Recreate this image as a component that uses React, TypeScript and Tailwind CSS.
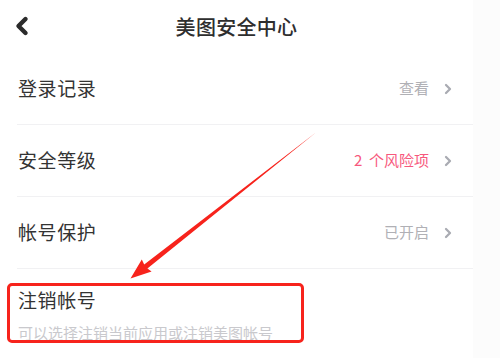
import { ChevronLeft, ChevronRight } from 'lucide-react'

const rows = [
  { label: '登录记录', value: '查看', danger: false },
  { label: '安全等级', value: '2\u00a0\u00a0个风险项', danger: true },
  { label: '帐号保护', value: '已开启', danger: false },
]

function Arrow() {
  return (
    <svg className="absolute left-0 top-0 pointer-events-none" width="500" height="358" viewBox="0 0 500 358">
      <polygon
        points="315.6,132.8 314.6,133.6 144.2,264.4 141.8,259.6 130.5,278.5 151.6,271.4 147.4,268.6"
        fill="#f7231c"
      />
    </svg>
  )
}

export default function App() {
  return (
    <div
      className="relative flex w-[500px] h-[358px] overflow-hidden bg-white"
      style={{ fontFamily: '"Noto Sans CJK SC", "Noto Sans", sans-serif' }}
    >
      <div className="w-[473px] flex flex-col">
        <header className="relative h-[53px] flex items-center justify-center">
          <ChevronLeft size={28} strokeWidth={3.8} className="absolute left-[8px] top-[12px] text-[#2b2b2b]" />
          <h1 className="text-[20px] font-medium text-[#2e2e2e] tracking-[0.3px]">美图安全中心</h1>
        </header>

        {rows.map(r => (
          <div key={r.label} className="ml-[17px] h-[72px] flex items-center justify-between border-b border-[#f1f1f3] pr-[17px]">
            <span className="pl-px text-[19px] text-[#333] tracking-[0.6px]">{r.label}</span>
            <span className="flex items-center gap-[11px]">
              <span className={`text-[15px] ${r.danger ? 'text-[#f7587d]' : 'text-[#b0b0b5]'}`}>{r.value}</span>
              <ChevronRight size={16} strokeWidth={3.4} className="text-[#a9abb2]" />
            </span>
          </div>
        ))}

        <div className="pl-[18px] pt-[16px] flex flex-col">
          <span className="text-[19px] text-[#333] tracking-[0.6px] leading-[30px]">注销帐号</span>
          <span className="mt-[8px] text-[15px] text-[#c9c9cd] leading-[20px]">可以选择注销当前应用或注销美图帐号</span>
        </div>
      </div>
      <div className="flex-1 bg-[#fcfcfc]" />

      <div className="absolute left-[7px] top-[283px] w-[297px] h-[60px] rounded-[5px] border-[3px] border-[#f7231c]" />
      <Arrow />
    </div>
  )
}
